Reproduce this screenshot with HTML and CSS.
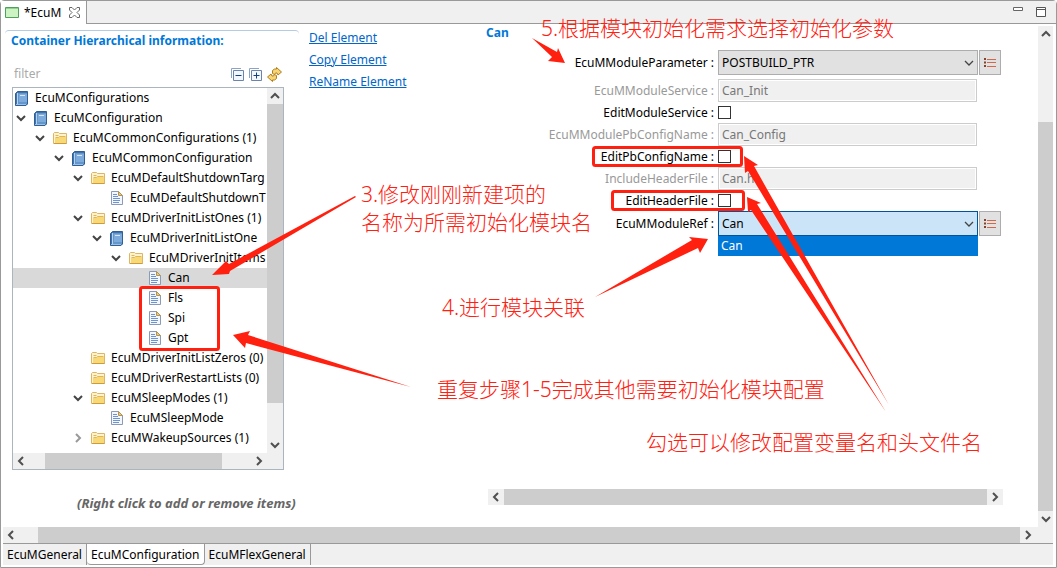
FILE: index.html
```html
<!DOCTYPE html>
<html lang="zh-CN">
<head>
  <meta charset="UTF-8">
  <meta name="viewport" content="width=device-width, initial-scale=1.0">
  <title>EcuM</title>
  <link rel="stylesheet" href="styles.css">
</head>
<body>
  <!-- shared icons -->
  <svg class="sprite" aria-hidden="true">
    <symbol id="i-book" viewBox="0 0 13 15">
      <path d="M2.500 .5h10v12.500l-1.500 1.500H.5V2.500z" fill="#3f74ad" stroke="#2f5f96"/>
      <path d="M3 2h9v11H3z" fill="#6396cb"/>
      <path d="M4 3h8v8H4z" fill="#7dabdb"/>
      <path d="M1 13.500h10" stroke="#9dbfe2"/>
      <path d="M2.500 2v11" stroke="#b7d2ec"/>
      <path d="M5 4.500h5" stroke="#d6e6f6"/>
    </symbol>
    <symbol id="i-folder" viewBox="0 0 14 12">
      <path d="M.5 11.500v-10l1-1h4l1 1h7v10z" fill="#fdf3cf" stroke="#dfb462"/>
      <path d="M2 11v-5h3l1-1h7v6z" fill="#f7d978"/>
      <path d="M2.500 3.500h3M2.500 5.500h3l1-1h6" fill="none" stroke="#e3b556"/>
      <path d="M1 11.500h12.500" stroke="#cf9a3a"/>
    </symbol>
    <symbol id="i-file" viewBox="0 0 12 14">
      <path d="M.5 .5h7l4 4v9H.5z" fill="#f3f8ff" stroke="#8c9ab5"/>
      <path d="M7.500 .5v4h4z" fill="#e9c77b" stroke="#b09558"/>
      <path d="M2 3.500h4M2 5.500h5M2 7.500h7M2 9.500h7M2 11.500h6" stroke="#6f93cf"/>
    </symbol>
    <symbol id="i-down" viewBox="0 0 10 10"><path d="M1 3l4 4 4-4" fill="none" stroke="currentColor" stroke-width="2"/></symbol>
    <symbol id="i-caret" viewBox="0 0 10 10"><path d="M1 3l4 4 4-4" fill="none" stroke="currentColor" stroke-width="1.300"/></symbol>
    <symbol id="i-up" viewBox="0 0 10 10"><path d="M1 7l4-4 4 4" fill="none" stroke="currentColor" stroke-width="2"/></symbol>
    <symbol id="i-left" viewBox="0 0 10 10"><path d="M7 1L3 5l4 4" fill="none" stroke="currentColor" stroke-width="2"/></symbol>
    <symbol id="i-right" viewBox="0 0 10 10"><path d="M3 1l4 4-4 4" fill="none" stroke="currentColor" stroke-width="2"/></symbol>
    <symbol id="i-list" viewBox="0 0 12 10">
      <path d="M0 1h2M0 4.500h2M0 8h2" stroke="#84432f" stroke-width="2"/>
      <path d="M3 1.500h9M3 4.500h9M3 8.500h9" stroke="#d0694c"/>
    </symbol>
  </svg>

  <div class="editor">
    <header class="tabbar">
      <div class="tab">
        <svg width="14" height="11" viewBox="0 0 14 11"><path d="M.5 .5h13v10H.5z" fill="#cdf3c4" stroke="#4fa05c"/><path d="M1 1.500h12" stroke="#8fd48d"/></svg>
        <span>*EcuM</span>
        <button class="plain" aria-label="Close"><svg width="11" height="11" viewBox="0 0 11 11"><path d="M.5 .5h2.500L5.500 3 8 .5h2.500V3L8 5.500 10.500 8v2.500H8L5.500 8 3 10.500H.5V8L3 5.500.5 3z" fill="#fff" stroke="#666"/></svg></button>
      </div>
      <div class="window-buttons">
        <button class="plain" aria-label="Minimize"><svg width="10" height="10" viewBox="0 0 10 10"><path d="M.5 .5h9v3h-9z" fill="#fff" stroke="#666"/></svg></button>
        <button class="plain" aria-label="Maximize"><svg width="10" height="10" viewBox="0 0 10 10"><path d="M.5 .5h9v9h-9zM0 2.500h10" fill="#fff" stroke="#555"/></svg></button>
      </div>
    </header>

    <div class="view">
      <main class="content">
        <section class="hierarchy">
          <h2>Container Hierarchical information:</h2>
          <div class="filter">
            <input type="text" placeholder="filter" aria-label="filter">
            <button class="plain" aria-label="Collapse all"><svg width="13" height="13" viewBox="0 0 13 13"><path d="M.5 10V.5H10" fill="none" stroke="#8ba3c7"/><path d="M2.500 2.500h10v10h-10z" fill="#f2f7fd" stroke="#6c84ad"/><path d="M4.500 7.500h6" stroke="#123f84"/></svg></button>
            <button class="plain" aria-label="Expand all"><svg width="13" height="13" viewBox="0 0 13 13"><path d="M.5 10V.5H10" fill="none" stroke="#8ba3c7"/><path d="M2.500 2.500h10v10h-10z" fill="#f2f7fd" stroke="#6c84ad"/><path d="M4.500 7.500h6M7.500 4.500v6" stroke="#123f84"/></svg></button>
            <button class="plain" aria-label="Refresh"><svg width="15" height="15" viewBox="0 0 15 15"><path d="M5.500 6.500V3.500l2-1.500h2V.5l5 4.500-3.500 3-1-2H8.500l-1 1.500z" fill="#f6d577" stroke="#b07d1c"/><path d="M9.500 8.500v3l-2 1.500h-2v1.500l-5-4.500L4 7l1 2h1.500l1-1.500z" fill="#f6d577" stroke="#b07d1c"/></svg></button>
          </div>

          <div class="tree-box">
            <ul class="tree">
              <li class="lv0"><svg class="book"><use href="#i-book"/></svg>EcuMConfigurations</li>
              <li class="lv1"><svg class="arrow"><use href="#i-down"/></svg><svg class="book"><use href="#i-book"/></svg>EcuMConfiguration</li>
              <li class="lv2"><svg class="arrow"><use href="#i-down"/></svg><svg class="folder"><use href="#i-folder"/></svg>EcuMCommonConfigurations (1)</li>
              <li class="lv3"><svg class="arrow"><use href="#i-down"/></svg><svg class="book"><use href="#i-book"/></svg>EcuMCommonConfiguration</li>
              <li class="lv4"><svg class="arrow"><use href="#i-down"/></svg><svg class="folder"><use href="#i-folder"/></svg>EcuMDefaultShutdownTarg</li>
              <li class="lv5"><span class="arrow"></span><svg class="file"><use href="#i-file"/></svg>EcuMDefaultShutdownT</li>
              <li class="lv4"><svg class="arrow"><use href="#i-down"/></svg><svg class="folder"><use href="#i-folder"/></svg>EcuMDriverInitListOnes (1)</li>
              <li class="lv5"><svg class="arrow"><use href="#i-down"/></svg><svg class="book"><use href="#i-book"/></svg>EcuMDriverInitListOne</li>
              <li class="lv6"><svg class="arrow"><use href="#i-down"/></svg><svg class="folder"><use href="#i-folder"/></svg>EcuMDriverInitItems</li>
              <li class="lv7 selected"><span class="arrow"></span><svg class="file"><use href="#i-file"/></svg>Can</li>
              <li class="lv7"><span class="arrow"></span><svg class="file"><use href="#i-file"/></svg>Fls</li>
              <li class="lv7"><span class="arrow"></span><svg class="file"><use href="#i-file"/></svg>Spi</li>
              <li class="lv7"><span class="arrow"></span><svg class="file"><use href="#i-file"/></svg>Gpt</li>
              <li class="lv4"><span class="arrow"></span><svg class="folder"><use href="#i-folder"/></svg>EcuMDriverInitListZeros (0)</li>
              <li class="lv4"><span class="arrow"></span><svg class="folder"><use href="#i-folder"/></svg>EcuMDriverRestartLists (0)</li>
              <li class="lv4"><svg class="arrow"><use href="#i-down"/></svg><svg class="folder"><use href="#i-folder"/></svg>EcuMSleepModes (1)</li>
              <li class="lv5"><span class="arrow"></span><svg class="file"><use href="#i-file"/></svg>EcuMSleepMode</li>
              <li class="lv4"><svg class="arrow closed"><use href="#i-right"/></svg><svg class="folder"><use href="#i-folder"/></svg>EcuMWakeupSources (1)</li>
            </ul>
            <div class="vscroll tree-v">
              <button aria-label="Scroll up"><svg><use href="#i-up"/></svg></button>
              <div class="thumb"></div>
              <button aria-label="Scroll down"><svg><use href="#i-down"/></svg></button>
            </div>
            <div class="hscroll tree-h">
              <button aria-label="Scroll left"><svg><use href="#i-left"/></svg></button>
              <div class="thumb"></div>
              <button aria-label="Scroll right"><svg><use href="#i-right"/></svg></button>
            </div>
          </div>
          <p class="hint">(Right click to add or remove items)</p>
        </section>

        <nav class="actions">
          <a href="#">Del Element</a>
          <a href="#">Copy Element</a>
          <a href="#">ReName Element</a>
        </nav>

        <section class="details">
          <h2>Can</h2>
          <form class="fields">
            <label for="param">EcuMModuleParameter :</label>
            <div class="combo">
              <select id="param"><option>POSTBUILD_PTR</option></select>
              <svg class="caret"><use href="#i-caret"/></svg>
            </div>
            <button type="button" class="list-btn" aria-label="Choose parameter"><svg><use href="#i-list"/></svg></button>

            <label for="service" class="off">EcuMModuleService :</label>
            <input type="text" id="service" value="Can_Init" disabled>

            <label for="edit-service">EditModuleService :</label>
            <input type="checkbox" id="edit-service">

            <label for="pbconfig" class="off">EcuMModulePbConfigName :</label>
            <input type="text" id="pbconfig" value="Can_Config" disabled>

            <label for="edit-pbconfig">EditPbConfigName :</label>
            <input type="checkbox" id="edit-pbconfig">

            <label for="header" class="off">IncludeHeaderFile :</label>
            <input type="text" id="header" value="Can.h" disabled>

            <label for="edit-header">EditHeaderFile :</label>
            <input type="checkbox" id="edit-header">

            <label for="ref">EcuMModuleRef :</label>
            <div class="combo open">
              <select id="ref"><option>Can</option></select>
              <svg class="caret"><use href="#i-caret"/></svg>
              <div class="options">Can</div>
            </div>
            <button type="button" class="list-btn" aria-label="Choose reference"><svg><use href="#i-list"/></svg></button>
          </form>
          <div class="hscroll details-h">
            <button aria-label="Scroll left"><svg><use href="#i-left"/></svg></button>
            <div class="thumb"></div>
            <button aria-label="Scroll right"><svg><use href="#i-right"/></svg></button>
          </div>
        </section>
      </main>

      <div class="vscroll view-v">
        <button aria-label="Scroll up"><svg><use href="#i-up"/></svg></button>
        <div class="thumb"></div>
        <button aria-label="Scroll down"><svg><use href="#i-down"/></svg></button>
      </div>
      <div class="hscroll view-h">
        <button aria-label="Scroll left"><svg><use href="#i-left"/></svg></button>
        <div class="thumb"></div>
        <button aria-label="Scroll right"><svg><use href="#i-right"/></svg></button>
      </div>
    </div>

    <footer class="pages">
      <button>EcuMGeneral</button>
      <button class="active">EcuMConfiguration</button>
      <button>EcuMFlexGeneral</button>
    </footer>
  </div>

  <!-- tutorial notes drawn over the editor -->
  <div class="notes">
    <svg width="1057" height="568" viewBox="0 0 1057 568">
      <g class="frames">
        <rect x="140.500" y="287.500" width="78" height="62" rx="2"/>
        <rect x="593.500" y="147.500" width="148" height="18" rx="2"/>
        <rect x="612.500" y="191.500" width="131" height="18" rx="2"/>
      </g>
      <g class="arrows">
        <path d="M532 38l25 14 1-4 7 15-17-2 4-4z"/>
        <path d="M356 197L230 271l-1 3-17 1 14-14 3 3 126-68z"/>
        <path d="M595 297l97-57-3-3 19 2-8 14-2-5z"/>
        <path d="M411 387L248 335l2-4-17 4 12 13 1-5z"/>
        <path d="M889 405L754 166l4-1-14-9 1 17 3-2z"/>
        <path d="M886 412L757 204l4-1-14-6 1 15 3-2z"/>
      </g>
    </svg>
    <p class="note note-5">5.根据模块初始化需求选择初始化参数</p>
    <p class="note note-3">3.修改刚刚新建项的<br>名称为所需初始化模块名</p>
    <p class="note note-4">4.进行模块关联</p>
    <p class="note note-repeat">重复步骤1-5完成其他需要初始化模块配置</p>
    <p class="note note-check">勾选可以修改配置变量名和头文件名</p>
  </div>
</body>
</html>
```

FILE: styles.css
```css
* {
  box-sizing: border-box;
}
body {
  margin: 0;
  position: relative;
  background: #fff;
  color: #000;
  font: 12px/20px "Noto Sans", "Noto Sans CJK SC", sans-serif;
}
h2, p, ul {
  margin: 0;
  padding: 0;
}
button, input, select {
  font: inherit;
  color: inherit;
  margin: 0;
  padding: 0;
}
svg {
  display: block;
  flex: none;
}
.sprite {
  position: absolute;
  width: 0;
  height: 0;
}
.plain {
  border: 0;
  background: none;
}
.editor {
  display: flex;
  flex-direction: column;
  min-height: 100vh;
  border: 1px solid #999;
  border-radius: 4px 4px 0 0;
  padding-bottom: 2px;
}

/* top tabs */
.tabbar {
  display: flex;
  justify-content: space-between;
  height: 23px;
  background: #f0f0f0;
  border-bottom: 1px solid #999;
}
.tab {
  display: flex;
  align-items: center;
  gap: 8px;
  height: 23px;
  padding: 0 6px 0 4px;
  background: #fff;
  border-right: 1px solid #999;
}
.tab span {
  margin-left: -3px;
}
.window-buttons {
  display: flex;
  gap: 13px;
  padding: 5px 10px;
}

/* scrollable view */
.view {
  flex: 1;
  display: grid;
  grid-template-columns: 1fr 15px;
  grid-template-rows: 1fr 16px;
  padding: 2px 3px 0 2px;
}
.vscroll, .hscroll {
  display: flex;
  background: #f0f0f0;
}
.vscroll {
  flex-direction: column;
}
.vscroll button, .hscroll button {
  display: flex;
  align-items: center;
  justify-content: center;
  flex: none;
  width: 16px;
  height: 16px;
  border: 0;
  background: none;
  color: #505050;
}
.vscroll svg, .hscroll svg {
  width: 10px;
  height: 10px;
}
.thumb {
  flex: 1;
  background: #cdcdcd;
}
.view-v .thumb {
  margin-top: 80px;
}
.view-h {
  grid-column: 1 / -1;
}
.view-h .thumb {
  margin-left: 19px;
}
.view-h button:last-child {
  margin-right: 17px;
}
.content {
  display: grid;
  grid-template-columns: 296px 181px 1fr;
}

/* container tree */
.hierarchy {
  padding: 4px 0 0 2px;
}
.hierarchy h2 {
  height: 30px;
  padding: 0 6px;
  border-top: 1px solid #b5cbe3;
  border-radius: 4px 4px 0 0;
}
h2 {
  color: #0078d7;
  font-size: 12px;
  line-height: 20px;
  font-weight: bold;
}
.filter {
  display: flex;
  align-items: center;
  gap: 5px;
  height: 27px;
  padding: 1px 17px 0 9px;
}
.filter input {
  flex: 1;
  min-width: 0;
  border: 0;
}
.filter input::placeholder {
  color: #aaa;
}
.tree-box {
  display: grid;
  grid-template-columns: 1fr 16px;
  grid-template-rows: 1fr 16px;
  margin: 0 15px 0 7px;
  border: 1px solid #abb5bf;
}
.tree {
  list-style: none;
  overflow: hidden;
  padding-bottom: 5px;
}
.tree li {
  display: flex;
  align-items: center;
  height: 20px;
  white-space: nowrap;
}
.tree .selected {
  background: #d9d9d9;
}
.tree .arrow {
  width: 10px;
  height: 10px;
  margin-right: 8px;
  flex: none;
  color: #444;
}
.tree .closed {
  color: #999;
}
.book {
  width: 13px;
  height: 15px;
  margin-right: 7px;
}
.folder {
  width: 14px;
  height: 12px;
  margin-right: 6px;
}
.file {
  width: 12px;
  height: 14px;
  margin: 0 7px 0 1px;
}
.lv0 { padding-left: 2px; }
.lv1 { padding-left: 3px; }
.lv2 { padding-left: 22px; }
.lv3 { padding-left: 41px; }
.lv4 { padding-left: 60px; }
.lv5 { padding-left: 79px; }
.lv6 { padding-left: 98px; }
.lv7 { padding-left: 117px; }
.tree-v button:last-child {
  margin-top: 34px;
}
.tree-h {
  grid-column: 1 / -1;
}
.tree-h .thumb {
  margin: 0 29px 0 16px;
}
.tree-h button:last-child {
  margin-right: 16px;
}
.hint {
  padding: 23px 0 0 72px;
  color: #666;
  font-size: 13px;
  font-weight: bold;
  font-style: italic;
  white-space: nowrap;
}

/* links */
.actions {
  display: flex;
  flex-direction: column;
  align-items: flex-start;
  gap: 2px;
  padding: 2px 0 0 10px;
}
.actions a {
  color: #0066cc;
}

/* parameter form */
.details {
  display: flex;
  flex-direction: column;
  padding: 0 35px 22px 6px;
}
.details h2 {
  margin: -3px 0 7px 0;
}
.fields {
  display: grid;
  grid-template-columns: 228px 1fr 22px;
  column-gap: 1px;
  row-gap: 4px;
  align-items: center;
  padding-right: 2px;
}
.fields label {
  grid-column: 1;
  line-height: 13px;
  text-align: right;
}
.fields .off {
  color: #999;
}
.combo {
  position: relative;
  margin-left: 3px;
}
.combo select {
  display: block;
  width: 100%;
  height: 25px;
  padding: 0 3px;
  appearance: none;
  border: 1px solid #adadad;
  border-radius: 0;
  background: #e1e1e1;
}
.combo.open select {
  border-color: #00549c;
  background: #cce4f7;
}
.caret {
  position: absolute;
  right: 4px;
  top: 8px;
  width: 10px;
  height: 10px;
  color: #444;
}
.options {
  position: absolute;
  top: 100%;
  left: 0;
  right: 0;
  height: 20px;
  padding: 0 3px;
  background: #0078d7;
  color: #fff;
}
.fields input[type="text"] {
  width: auto;
  min-width: 0;
  height: 23px;
  margin: 0 1px 0 3px;
  padding: 0 3px;
  border: 1px solid #ccc;
  box-shadow: inset 0 0 0 1px #fff;
  background: #f0f0f0;
  color: #777;
}
.fields input[type="checkbox"] {
  width: 13px;
  height: 13px;
  margin-left: 3px;
  appearance: none;
  border: 1px solid #333;
  background: #fff;
}
.list-btn {
  display: flex;
  align-items: center;
  justify-content: center;
  height: 25px;
  border: 1px solid #adadad;
  background: #e1e1e1;
}
.list-btn svg {
  width: 12px;
  height: 10px;
}
.details-h {
  margin: auto 0 0 2px;
}

/* bottom page tabs */
.pages {
  display: flex;
  height: 22px;
  margin: 0 3px 0 2px;
  border-top: 1px solid #999;
  background: #f0f0f0;
}
.pages button {
  height: 21px;
  padding: 0 4px;
  line-height: 19px;
  border: 0;
  border-right: 1px solid #999;
  background: none;
}
.pages .active {
  background: #fff;
  border-bottom: 1px solid #999;
  border-radius: 0 0 4px 4px;
}

/* notes */
.notes {
  position: absolute;
  top: 0;
  left: 0;
  pointer-events: none;
  color: #ff2010;
}
.frames {
  fill: none;
  stroke: #ff2010;
  stroke-width: 3;
}
.arrows {
  fill: #ff2010;
}
.note {
  position: absolute;
  font-size: 21px;
  line-height: 28px;
  font-weight: 300;
  white-space: nowrap;
}
.note-5 { left: 541px; top: 14px; }
.note-3 { left: 361px; top: 180px; }
.note-4 { left: 442px; top: 293px; }
.note-repeat { left: 437px; top: 375px; }
.note-check { left: 646px; top: 428px; }
```
